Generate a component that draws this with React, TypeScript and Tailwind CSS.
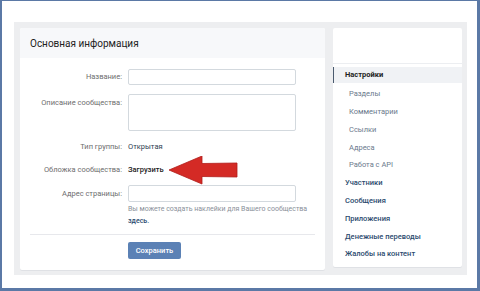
import React from 'react';

const font = { fontFamily: 'Roboto, "Open Sans", sans-serif' };

const subItems = ['Разделы', 'Комментарии', 'Ссылки', 'Адреса', 'Работа с API'];
const mainItems = ['Участники', 'Сообщения', 'Приложения', 'Денежные переводы', 'Жалобы на контент'];

function Label({ children }: { children: React.ReactNode }) {
  return <div className="w-[103px] shrink-0 text-right text-[7.5px] text-[#6d6d6d] pr-[1px]">{children}</div>;
}

function RedArrow() {
  return (
    <svg width="72" height="30" viewBox="0 0 72 30" className="absolute left-[40px] -top-[8px]">
      <path d="M1 14 L34 0 L34 7.5 L69 7 L69 21 L34 20.5 L34 28 Z" fill="#d42a25" stroke="#b01d1b" strokeWidth="0.8" strokeLinejoin="round" />
    </svg>
  );
}

export default function App() {
  return (
    <div style={font} className="w-[480px] h-[291px] bg-white border-t border-l-2 border-r-[3px] border-b-[3px] border-[#5b79a6] pt-[21px] pl-[12px]">
      <div className="w-[453px] h-[253px] bg-[#edeef0] flex gap-[8px] pt-[6px] pl-[6px]">
        {/* main card */}
        <div className="w-[305px] h-[242px] bg-white rounded-[2px] flex flex-col shadow-[0_1px_0_#dfe1e5]">
          <div className="h-[30px] bg-[#f7f8fa] flex items-center pl-[10px] text-[10px] text-[#222] rounded-t-[2px]">
            Основная информация
          </div>
          <div className="flex flex-col pt-[11px]">
            <div className="flex items-center gap-[5px] h-[16px]">
              <Label>Название:</Label>
              <div className="w-[168px] h-[16px] border border-[#d3d9de] rounded-[2px]" />
            </div>
            <div className="flex items-start gap-[5px] mt-[9px]">
              <div className="pt-[3px]"><Label>Описание сообщества:</Label></div>
              <div className="w-[168px] h-[37px] border border-[#d3d9de] rounded-[2px]" />
            </div>
            <div className="flex items-center gap-[5px] mt-[11px] h-[10px]">
              <Label>Тип группы:</Label>
              <span className="text-[7.5px] text-[#2c3e52]">Открытая</span>
            </div>
            <div className="flex items-center gap-[5px] mt-[13px] h-[10px]">
              <Label>Обложка сообщества:</Label>
              <span className="relative text-[7.5px] text-[#222] font-medium">
                Загрузить
                <RedArrow />
              </span>
            </div>
            <div className="flex items-center gap-[5px] mt-[10px] h-[17px]">
              <Label>Адрес страницы:</Label>
              <div className="w-[168px] h-[17px] border border-[#d3d9de] rounded-[2px]" />
            </div>
            <div className="pl-[108px] mt-[1px] text-[7px] leading-[12px] text-[#8a9099]">
              Вы можете создать наклейки для Вашего сообщества
              <div className="text-[#2a4a6f] font-medium">здесь.</div>
            </div>
            <div className="mx-[10px] mt-[7px] h-px bg-[#e7e8ec]" />
            <div className="pl-[108px] mt-[7px]">
              <div className="w-[53px] h-[17px] rounded-[2px] bg-[#5b81b5] text-white text-[7.5px] font-medium flex items-center justify-center">
                Сохранить
              </div>
            </div>
          </div>
        </div>
        {/* sidebar */}
        <div className="w-[129px] h-[239px] bg-white rounded-[2px] flex flex-col shadow-[0_1px_0_#dfe1e5]">
          <div className="h-[36px] border-b border-[#eceef1]" />
          <div className="mt-[3px] h-[16px] bg-[#f0f2f5] border-l-[1.5px] border-[#4a5a6e] flex items-center pl-[11px] text-[7.5px] font-bold text-[#222]">
            Настройки
          </div>
          <div className="flex flex-col pt-[2px]">
            {subItems.map((s) => (
              <div key={s} className="h-[17.8px] flex items-center pl-[16px] text-[7.5px] text-[#6b7a8c]">{s}</div>
            ))}
            {mainItems.map((s) => (
              <div key={s} className="h-[17.8px] flex items-center pl-[12px] text-[7.5px] font-medium text-[#2b4a6e]">{s}</div>
            ))}
          </div>
        </div>
      </div>
    </div>
  );
}
